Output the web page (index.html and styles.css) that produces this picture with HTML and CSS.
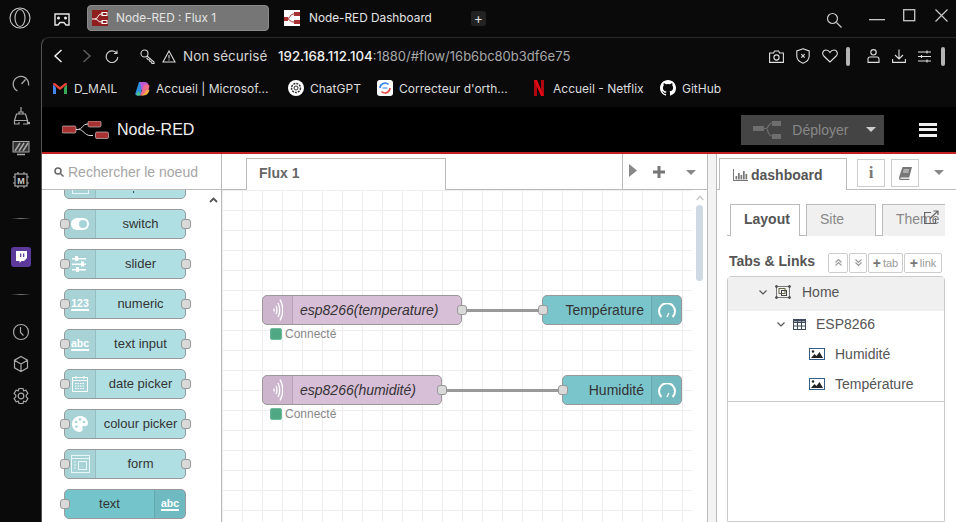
FILE: index.html
```html
<!DOCTYPE html>
<html lang="fr">
<head>
    <meta charset="UTF-8">
    <meta name="viewport" content="width=device-width, initial-scale=1.0">
    <title>Node-RED : Flux 1</title>
    <link rel="stylesheet" href="styles.css">
</head>
<body>
    <!-- Browser tab strip -->
    <div class="titlebar">
        <svg class="opera-logo" width="22" height="22" viewBox="0 0 22 22" fill="none" stroke="#c8c8c8" stroke-width="1.100"><circle cx="11" cy="11" r="10"/><ellipse cx="11" cy="11" rx="5" ry="8.500"/></svg>
        <svg class="game-icon" width="16" height="13" viewBox="0 0 16 13" fill="none" stroke="#e8e8e8" stroke-width="1.400"><path d="M1 1h14v11h-3l-2-2.500H6L4 12H1z"/><circle cx="4.500" cy="5" r=".8" fill="#e8e8e8"/><circle cx="11.500" cy="5" r=".8" fill="#e8e8e8"/></svg>
        <div class="tab tab-active">
            <svg class="favicon" width="16" height="16" viewBox="0 0 16 16"><rect width="16" height="16" fill="#8f1f1f"/><path d="M0 9h3c3 0 3-5 6-5h2M3 9c3 0 3 3 6 3h2" fill="none" stroke="#fff" stroke-width="1"/><rect x="10" y="2.500" width="5" height="3" fill="none" stroke="#fff"/><rect x="10" y="10.500" width="5" height="3" fill="none" stroke="#fff"/></svg>
            <span>Node-RED : Flux 1</span>
        </div>
        <div class="tab tab-other">
            <svg class="favicon" width="16" height="16" viewBox="0 0 16 16"><rect width="16" height="16" fill="#fff"/><path d="M0 9h3c3 0 3-5 6-5h2M3 9c3 0 3 3 6 3h2" fill="none" stroke="#a83232" stroke-width="1"/><rect x="10" y="2" width="6" height="4" fill="#a83232"/><rect x="10" y="10" width="6" height="4" fill="#a83232"/><rect y="7" width="4" height="4" fill="#a83232"/></svg>
            <span>Node-RED Dashboard</span>
        </div>
        <div class="new-tab">+</div>
        <div class="window-controls">
            <svg class="win-search" width="16" height="16" viewBox="0 0 16 16" fill="none" stroke="#c8c8c8" stroke-width="1.200"><circle cx="6.500" cy="6.500" r="5"/><path d="M10.500 10.500l5 5"/></svg>
            <svg class="win-min" width="16" height="2" viewBox="0 0 16 2"><rect width="16" height="1.300" fill="#c8c8c8"/></svg>
            <svg class="win-max" width="13" height="13" viewBox="0 0 13 13" fill="none" stroke="#c8c8c8" stroke-width="1.300"><rect x=".7" y=".7" width="11" height="11"/></svg>
            <svg class="win-close" width="13" height="13" viewBox="0 0 13 13" fill="none" stroke="#c8c8c8" stroke-width="1.200"><path d="M.5.500l12 12M12.500.500l-12 12"/></svg>
        </div>
    </div>

    <div class="shell">
        <!-- Opera side rail -->
        <div class="rail">
            <svg class="rail-icon" width="18" height="18" viewBox="0 0 18 18" fill="none" stroke="#a8a8a8" stroke-width="1.300"><path d="M5.500 16A7.700 7.700 0 1 1 16.500 10.500M9.500 9l4-4.500"/></svg>
            <svg class="rail-icon" width="18" height="18" viewBox="0 0 18 18" fill="none" stroke="#a8a8a8" stroke-width="1.200"><path d="M9 0v5M7 5h4v2H7zM4.500 7h9l2 6.500h-13zM2.500 13.500V17H7v-2M11 17h4.500v-3.500"/><circle cx="17" cy="16" r=".7" fill="#a8a8a8"/></svg>
            <svg class="rail-icon" width="18" height="18" viewBox="0 0 18 18" fill="none" stroke="#a8a8a8" stroke-width="1.500"><rect x="1" y="2.500" width="16" height="10.500" fill="#333" stroke-width="1"/><path d="M3 12l5-8M7 12l5-8M11 12l5-8M5 15.500h8"/></svg>
            <svg class="rail-icon" width="18" height="18" viewBox="0 0 18 18" fill="none" stroke="#a8a8a8" stroke-width="1.200"><rect x="3" y="3" width="12" height="12"/><path d="M1 6h2M1 12h2M15 6h2M15 12h2M6 1v2M12 1v2M6 15v2M12 15v2"/><text x="9" y="12.500" text-anchor="middle" class="chip-letter">M</text></svg>
            <div class="rail-sep rail-sep-first"></div>
            <div class="twitch">
                <svg width="12" height="12" viewBox="0 0 12 12"><path d="M1 0h11v7l-3 3H6.500L4.500 12V10H1z" fill="#fff"/><rect x="5" y="2.500" width="1.300" height="3.500" fill="#5b3a9b"/><rect x="8" y="2.500" width="1.300" height="3.500" fill="#5b3a9b"/></svg>
            </div>
            <div class="rail-sep rail-sep-last"></div>
            <svg class="rail-icon" width="18" height="18" viewBox="0 0 18 18" fill="none" stroke="#a8a8a8" stroke-width="1.200"><circle cx="9" cy="9" r="7.500"/><path d="M8.500 4v5.500l3 3"/></svg>
            <svg class="rail-icon" width="18" height="18" viewBox="0 0 18 18" fill="none" stroke="#a8a8a8" stroke-width="1.200"><path d="M9 1.500l6.500 3.700v7.600L9 16.500l-6.500-3.700V5.200zM2.500 5.200L9 9l6.500-3.800M9 9v7.500"/></svg>
            <svg class="rail-icon" width="18" height="18" viewBox="0 0 18 18" fill="none" stroke="#a8a8a8" stroke-width="1.200"><circle cx="9" cy="9" r="2.800"/><path d="M7 1.500h4l.6 2.300 2.300-.7 2 3.400-1.700 1.700v1.600l1.700 1.700-2 3.400-2.300-.7-.6 2.300H7l-.6-2.300-2.300.7-2-3.400 1.700-1.700V8.200L2.100 6.500l2-3.400 2.300.7z"/></svg>
        </div>

        <div class="window">
            <!-- Address bar -->
            <div class="addressbar">
                <svg class="nav-back" width="10" height="14" viewBox="0 0 10 14" fill="none" stroke="#f0f0f0" stroke-width="1.500"><path d="M8.500 1L2 7l6.500 6"/></svg>
                <svg class="nav-forward" width="10" height="14" viewBox="0 0 10 14" fill="none" stroke="#5c5c5c" stroke-width="1.500"><path d="M1.500 1L8 7l-6.500 6"/></svg>
                <svg class="nav-reload" width="14" height="14" viewBox="0 0 14 14" fill="none" stroke="#c8c8c8" stroke-width="1.200"><path d="M11.800 4.500A5.800 5.800 0 1 0 12.800 8M9 4.500h3V1.500"/></svg>
                <svg class="key" width="15" height="15" viewBox="0 0 15 15" fill="none" stroke="#d8d8d8" stroke-width="1.100"><circle cx="4.500" cy="4.500" r="3.500"/><path d="M7 7l7 6v1.500h-2l-.5-1.500-1.500-.5-.5-1.500-1.500-.5-1.500-1.500"/></svg>
                <svg class="warn" width="14" height="13" viewBox="0 0 14 13" fill="none" stroke="#d8d8d8" stroke-width="1.100"><path d="M7 1l6 11H1zM7 5v3.500M7 9.500v1"/></svg>
                <span class="insecure">Non sécurisé</span>
                <span class="url"><b>192.168.112.104</b>:1880/#flow/16b6bc80b3df6e75</span>
                <div class="address-tools">
                    <svg width="15" height="13" viewBox="0 0 15 13" fill="none" stroke="#e0e0e0" stroke-width="1.100"><path d="M.6 3h4l1-2h4l1 2h3.800v9.400H.6z"/><circle cx="7.500" cy="7.500" r="2.600"/></svg>
                    <svg width="14" height="16" viewBox="0 0 14 16" fill="none" stroke="#e0e0e0" stroke-width="1.100"><path d="M7 .8l6.200 2.200v5c0 3.500-3 6-6.200 7.200C3.800 14 .8 11.500.8 8V3z"/><path d="M5.300 6.200l3.400 3.400M8.700 6.200L5.300 9.600"/></svg>
                    <svg width="16" height="14" viewBox="0 0 16 14" fill="none" stroke="#e0e0e0" stroke-width="1.100"><path d="M8 13L1.800 7C-.4 4.500 1 1 4 1c2 0 3.200 1.200 4 2.500C8.800 2.200 10 1 12 1c3 0 4.400 3.500 2.200 6z"/></svg>
                    <div class="tool-bar tool-bar-first"></div>
                    <svg class="tool-user" width="13" height="14" viewBox="0 0 13 14" fill="none" stroke="#e0e0e0" stroke-width="1.100"><circle cx="6.500" cy="3.300" r="2.700"/><path d="M1 13.400V10c0-1.300 1-2 2-2h7c1 0 2 .7 2 2v3.400z"/></svg>
                    <svg width="14" height="14" viewBox="0 0 14 14" fill="none" stroke="#e0e0e0" stroke-width="1.100"><path d="M7 .5v9M3 6l4 4 4-4M.6 10v3.400h12.800V10"/></svg>
                    <svg width="13" height="13" viewBox="0 0 13 13" fill="none" stroke="#e0e0e0" stroke-width="1.100"><path d="M0 2h13M0 6.500h13M0 11h13M9 .5v3M3.500 5v3M9 9.500v3"/></svg>
                    <div class="tool-bar tool-bar-last"></div>
                </div>
            </div>

            <!-- Bookmarks -->
            <div class="bookmarks">
                <div class="bookmark bm-mail">
                    <svg width="14" height="11" viewBox="0 0 14 11"><path d="M0 1.500V11h3V4.500z" fill="#4285f4"/><path d="M14 1.500V11h-3V4.500z" fill="#34a853"/><path d="M0 1.500C0 0 1.500-.3 2.500.5L7 4 11.500.5C12.500-.3 14 0 14 1.500L7 7z" fill="#ea4335"/></svg>
                    <span>D_MAIL</span>
                </div>
                <div class="bookmark bm-ms">
                    <svg width="15" height="15" viewBox="0 0 15 15"><path d="M4 1h4L6 13c-.3 1-1 1.500-2 1.500H2C.5 14.500 0 13 .5 12z" fill="#2f8ee0"/><path d="M5 1h5c2 0 3 1 3.500 3l-1 4-6 1z" fill="#b85ad8"/><path d="M9 4c2-1 4.500-1 5.500 1l-1 4c-1 3-3 5-6 5.500H5z" fill="#ef6c8a"/><path d="M6 14.500c2-.5 4-2 5-5l3.500-1c-.5 3-2.500 6-6 6z" fill="#f5b13d"/><path d="M1 13l3-3 1.500 4.500H2z" fill="#4bc28a"/></svg>
                    <span>Accueil | Microsof...</span>
                </div>
                <div class="bookmark bm-gpt">
                    <svg width="16" height="16" viewBox="0 0 16 16"><circle cx="8" cy="8" r="8" fill="#fff"/><circle cx="8" cy="8" r="4.500" fill="none" stroke="#333" stroke-width="1.500" stroke-dasharray="2 1"/><circle cx="8" cy="8" r="2" fill="none" stroke="#333"/></svg>
                    <span>ChatGPT</span>
                </div>
                <div class="bookmark bm-correct">
                    <svg width="16" height="16" viewBox="0 0 16 16"><rect width="16" height="16" rx="3" fill="#fff"/><path d="M3 8a5 5 0 0 1 8.500-3.500" fill="none" stroke="#2f80ed" stroke-width="1.600"/><path d="M13 8a5 5 0 0 1-8.500 3.500" fill="none" stroke="#e8483f" stroke-width="1.600"/><path d="M5.500 8h5" stroke="#2f80ed"/></svg>
                    <span>Correcteur d'orth...</span>
                </div>
                <div class="bookmark bm-netflix">
                    <svg width="10" height="16" viewBox="0 0 10 16"><path d="M0 0h3v16l-3 .3z" fill="#b1060f"/><path d="M7 0h3v16.300l-3-.3z" fill="#b1060f"/><path d="M0 0h3l7 16.300-3-.3z" fill="#e50914"/></svg>
                    <span>Accueil - Netflix</span>
                </div>
                <div class="bookmark bm-github">
                    <svg width="16" height="16" viewBox="0 0 16 16"><path fill="#fff" d="M8 0C3.580 0 0 3.580 0 8c0 3.540 2.290 6.530 5.470 7.590.4.070.55-.17.55-.38v-1.340c-2.230.48-2.690-1.070-2.690-1.070-.36-.92-.89-1.170-.89-1.170-.73-.5.050-.49.050-.49.800.060 1.230.830 1.230.830.710 1.220 1.870.870 2.330.660.070-.52.280-.870.510-1.070-1.780-.2-3.640-.89-3.640-3.950 0-.87.310-1.590.820-2.150-.080-.2-.360-1.020.080-2.120 0 0 .670-.210 2.200.820a7.600 7.600 0 0 1 4 0c1.530-1.040 2.200-.82 2.200-.82.440 1.100.160 1.920.080 2.120.510.560.820 1.270.820 2.150 0 3.070-1.870 3.750-3.650 3.950.290.250.540.730.540 1.480v2.200c0 .210.150.460.550.380A8 8 0 0 0 16 8c0-4.420-3.580-8-8-8z"/></svg>
                    <span>GitHub</span>
                </div>
            </div>

            <!-- Node-RED -->
            <div class="nr-header">
                <svg class="nr-logo" width="47" height="18" viewBox="0 0 47 18"><path d="M14 8.500h2c4 0 5-5.500 9-5.500h2M17 8.500c4 0 6 6 11 6h3" fill="none" stroke="#ddd" stroke-width="1"/><rect y="5" width="14" height="7" rx="1.500" fill="#a83232" stroke="#ddd" stroke-width=".6"/><rect x="26" y="0" width="13" height="6" rx="1.500" fill="#a83232" stroke="#ddd" stroke-width=".6"/><rect x="33.500" y="11" width="13" height="6.500" rx="1.500" fill="#a83232" stroke="#ddd" stroke-width=".6"/></svg>
                <span class="nr-title">Node-RED</span>
                <div class="deploy">
                    <svg width="28" height="18" viewBox="0 0 28 18"><rect y="5" width="11" height="5" fill="#6e6e6e"/><path d="M11 7.500h2c2 0 3-5.500 6-5.500M14 8c1 3 2 7 5 7" fill="none" stroke="#6e6e6e" stroke-width="1.200"/><rect x="19" width="9" height="5" fill="#6e6e6e"/><rect x="19" y="13" width="9" height="5" fill="#6e6e6e"/></svg>
                    <span>Déployer</span>
                    <i class="caret caret-deploy"></i>
                </div>
                <div class="burger"><i></i><i></i><i></i></div>
            </div>

            <div class="nr-main">
                <!-- Palette -->
                <div class="palette">
                    <div class="palette-search">
                        <svg width="10" height="10" viewBox="0 0 10 10" fill="none" stroke="#666" stroke-width="1.500"><circle cx="4" cy="4" r="3"/><path d="M6.500 6.500L9.500 9.500"/></svg>
                        <span>Rechercher le noeud</span>
                    </div>
                    <div class="palette-list">
                        <svg class="palette-chevron" width="9" height="6" viewBox="0 0 9 6" fill="none" stroke="#555" stroke-width="1.800"><path d="M1 5l3.500-3.500L8 5"/></svg>
                        <div class="pnode">
                            <div class="pnode-icon"><i class="cut-icon"></i></div>
                            <div class="pnode-label"><i class="cut-descender"></i></div>
                        </div>
                        <div class="pnode">
                            <i class="port port-in"></i>
                            <div class="pnode-icon"><svg width="18" height="12" viewBox="0 0 18 12"><rect width="18" height="12" rx="6" fill="#fff"/><circle cx="12" cy="6" r="4" fill="#a5d3d7"/></svg></div>
                            <div class="pnode-label">switch</div>
                            <i class="port port-out"></i>
                        </div>
                        <div class="pnode">
                            <i class="port port-in"></i>
                            <div class="pnode-icon"><svg width="16" height="18" viewBox="0 0 16 18" fill="#fff"><rect y="3" width="14" height="1.500"/><rect y="8.500" width="14" height="1.500"/><rect y="14" width="14" height="1.500"/><rect x="3" y="1" width="3" height="5"/><rect x="9" y="6.500" width="3" height="5"/><rect x="4" y="12" width="3" height="5"/></svg></div>
                            <div class="pnode-label">slider</div>
                            <i class="port port-out"></i>
                        </div>
                        <div class="pnode">
                            <i class="port port-in"></i>
                            <div class="pnode-icon"><span class="text-icon">123</span></div>
                            <div class="pnode-label">numeric</div>
                            <i class="port port-out"></i>
                        </div>
                        <div class="pnode">
                            <i class="port port-in"></i>
                            <div class="pnode-icon"><span class="text-icon">abc</span></div>
                            <div class="pnode-label">text input</div>
                            <i class="port port-out"></i>
                        </div>
                        <div class="pnode">
                            <i class="port port-in"></i>
                            <div class="pnode-icon"><svg width="16" height="16" viewBox="0 0 16 16" fill="none" stroke="#fff"><rect x=".5" y="1.500" width="15" height="14"/><path d="M.5 4.500h15M4 0v3M12 0v3"/><path d="M3 7.500h10M3 10h10M3 12.500h10" stroke-dasharray="1.500 1"/></svg></div>
                            <div class="pnode-label">date picker</div>
                            <i class="port port-out"></i>
                        </div>
                        <div class="pnode">
                            <i class="port port-in"></i>
                            <div class="pnode-icon"><svg width="16" height="16" viewBox="0 0 16 16"><path d="M8 0c4.500 0 8 3 8 7.500 0 2-2 3-3.500 2.500-2-.5-2.500 1-2 2.500.5 2-1 3.500-3 3.500C3 16 0 12 0 8s3.500-8 8-8z" fill="#fff"/><circle cx="4" cy="6" r="1.300" fill="#a5d3d7"/><circle cx="8" cy="3.500" r="1.300" fill="#a5d3d7"/><circle cx="12" cy="6" r="1.300" fill="#a5d3d7"/><circle cx="4.500" cy="10.500" r="1.300" fill="#a5d3d7"/></svg></div>
                            <div class="pnode-label">colour picker</div>
                            <i class="port port-out"></i>
                        </div>
                        <div class="pnode">
                            <i class="port port-in"></i>
                            <div class="pnode-icon"><svg width="19" height="18" viewBox="0 0 19 18" fill="none" stroke="#e8f6f7"><rect x=".5" y=".5" width="18" height="17"/><path d="M.5 3.500h18"/><rect x="7.500" y="6.500" width="8" height="8"/><path d="M3 7h2M3 10h2M3 13h2"/></svg></div>
                            <div class="pnode-label">form</div>
                            <i class="port port-out"></i>
                        </div>
                        <div class="pnode pnode-output">
                            <i class="port port-in"></i>
                            <div class="pnode-label">text</div>
                            <div class="pnode-icon"><span class="text-icon">abc</span></div>
                        </div>
                    </div>
                </div>

                <!-- Workspace -->
                <div class="workspace">
                    <div class="ws-tabs">
                        <div class="ws-tab">Flux 1</div>
                        <div class="ws-tools">
                            <svg class="ws-play" width="8" height="13" viewBox="0 0 8 13"><path d="M0 0l8 6.500-8 6.500z" fill="#888"/></svg>
                            <svg class="ws-plus" width="12" height="12" viewBox="0 0 12 12"><path d="M4.500 0h3v4.500H12v3H7.500V12h-3V7.500H0v-3h4.500z" fill="#777"/></svg>
                            <i class="caret caret-ws"></i>
                        </div>
                    </div>
                    <div class="canvas">
                        <div class="canvas-grid"></div>
                        <svg class="canvas-chevron" width="8" height="6" viewBox="0 0 8 6" fill="none" stroke="#ccc" stroke-width="1.800"><path d="M.7 5L4 1.500 7.300 5"/></svg>
                        <div class="canvas-thumb"></div>

                        <div class="wire wire-temp"></div>
                        <div class="wire wire-hum"></div>

                        <div class="node node-mqtt node-temp-in">
                            <div class="node-icon"><svg width="10" height="24" viewBox="0 0 10 24" fill="none" stroke="#fff" stroke-width="1.300"><path d="M1 10.500v3M3 8c1.200 2.500 1.200 5.500 0 8M5 5c2.200 4.500 2.200 9.500 0 14M7 1.500c3.500 6.500 3.500 14.500 0 21"/></svg></div>
                            <div class="node-label">esp8266(temperature)</div>
                            <i class="port port-out"></i>
                        </div>
                        <div class="status status-temp"><i></i>Connecté</div>

                        <div class="node node-gauge node-temp-out">
                            <i class="port port-in"></i>
                            <div class="node-label">Température</div>
                            <div class="node-icon"><svg width="18" height="15" viewBox="0 0 18 15" fill="none" stroke="#fff" stroke-width="2"><path d="M3.500 14a8 8 0 1 1 11 0"/><path d="M9 14l1.800-4" stroke-width="1.300"/></svg></div>
                        </div>

                        <div class="node node-mqtt node-hum-in">
                            <div class="node-icon"><svg width="10" height="24" viewBox="0 0 10 24" fill="none" stroke="#fff" stroke-width="1.300"><path d="M1 10.500v3M3 8c1.200 2.500 1.200 5.500 0 8M5 5c2.200 4.500 2.200 9.500 0 14M7 1.500c3.500 6.500 3.500 14.500 0 21"/></svg></div>
                            <div class="node-label">esp8266(humidité)</div>
                            <i class="port port-out"></i>
                        </div>
                        <div class="status status-hum"><i></i>Connecté</div>

                        <div class="node node-gauge node-hum-out">
                            <i class="port port-in"></i>
                            <div class="node-label">Humidité</div>
                            <div class="node-icon"><svg width="18" height="15" viewBox="0 0 18 15" fill="none" stroke="#fff" stroke-width="2"><path d="M3.500 14a8 8 0 1 1 11 0"/><path d="M9 14l1.800-4" stroke-width="1.300"/></svg></div>
                        </div>
                    </div>
                </div>

                <div class="gutter"></div>

                <!-- Sidebar -->
                <div class="sidebar">
                    <div class="side-tabs">
                        <div class="side-tab">
                            <svg width="15" height="12" viewBox="0 0 15 12" fill="#777"><path d="M0 0h1v11h14v1H0zM2.500 7h1.700v3.500H2.500zM5 4h1.700v6.500H5zM7.500 6h1.700v4.500H7.500zM10 2h1.700v8.500H10zM12.500 5h1.700v5.500h-1.700z"/></svg>
                            <span>dashboard</span>
                        </div>
                        <div class="side-btn side-info">i</div>
                        <div class="side-btn">
                            <svg width="13" height="13" viewBox="0 0 13 13"><path d="M3.500 0H13l-2.800 10.500H2C1.200 10.500 1 11.800 2 11.800h8.500L10.200 13H1.500C0 13-.2 11 .3 9.500z" fill="#777"/><path d="M4.500 3h5.500M4 5h5.500" stroke="#fff" stroke-width=".8"/></svg>
                        </div>
                        <i class="caret caret-side"></i>
                    </div>
                    <div class="side-body">
                        <div class="inner-tabs">
                            <div class="inner-tab inner-active">Layout</div>
                            <div class="inner-tab">Site</div>
                            <div class="inner-tab inner-theme">Theme</div>
                            <svg class="popout" width="15" height="14" viewBox="0 0 15 14" fill="none" stroke="#666" stroke-width="1.200"><path d="M7 2.500H.6v11h11V8M6 8.500L14 1M9.500 1H14v4"/></svg>
                        </div>
                        <div class="links-head">
                            <span>Tabs &amp; Links</span>
                            <div class="mini-btns">
                                <div class="mini mini-arrow">
                                    <svg width="7" height="7" viewBox="0 0 7 7" fill="none" stroke="#999" stroke-width="1.100"><path d="M.5 3.500l3-3 3 3M.5 6.500l3-3 3 3"/></svg>
                                </div>
                                <div class="mini mini-arrow">
                                    <svg width="7" height="7" viewBox="0 0 7 7" fill="none" stroke="#999" stroke-width="1.100"><path d="M.5.500l3 3 3-3M.5 3.500l3 3 3-3"/></svg>
                                </div>
                                <div class="mini mini-tab"><b>+</b>tab</div>
                                <div class="mini mini-link"><b>+</b>link</div>
                            </div>
                        </div>
                        <div class="tree">
                            <div class="tree-row tree-home">
                                <svg width="8" height="5" viewBox="0 0 8 5" fill="none" stroke="#555" stroke-width="1.200"><path d="M.5.500L4 4 7.500.500"/></svg>
                                <svg width="16" height="14" viewBox="0 0 16 14" fill="none" stroke="#444" stroke-width="1"><rect x="1.500" y="1.500" width="13" height="11" stroke-opacity=".7"/><rect x="4" y="3.500" width="6" height="5" stroke="#6b6b4a"/><rect x="6.500" y="5.500" width="5" height="5"/><circle cx="1.500" cy="1.500" r="1" fill="#555"/><circle cx="14.500" cy="1.500" r="1" fill="#555"/><circle cx="1.500" cy="12.500" r="1" fill="#555"/><circle cx="14.500" cy="12.500" r="1" fill="#555"/></svg>
                                <span>Home</span>
                            </div>
                            <div class="tree-row tree-group">
                                <svg width="8" height="5" viewBox="0 0 8 5" fill="none" stroke="#555" stroke-width="1.200"><path d="M.5.500L4 4 7.500.500"/></svg>
                                <svg width="13" height="11" viewBox="0 0 13 11" fill="none" stroke="#3c4a5c"><rect x=".5" y=".5" width="12" height="10"/><path d="M.5 3.500h12M.5 7h12M4.500.5v10M8.500.5v10"/><path d="M.5 1.500h12" stroke-width="2"/></svg>
                                <span>ESP8266</span>
                            </div>
                            <div class="tree-row tree-widget">
                                <svg width="16" height="12" viewBox="0 0 16 12"><rect x=".5" y=".5" width="15" height="11" fill="#fff" stroke="#345d8a"/><path d="M2 10l3.500-4 2 2 3-4 3.500 6z" fill="#222"/><circle cx="4" cy="3.500" r="1.200" fill="#222"/></svg>
                                <span>Humidité</span>
                            </div>
                            <div class="tree-row tree-widget">
                                <svg width="16" height="12" viewBox="0 0 16 12"><rect x=".5" y=".5" width="15" height="11" fill="#fff" stroke="#345d8a"/><path d="M2 10l3.500-4 2 2 3-4 3.500 6z" fill="#222"/><circle cx="4" cy="3.500" r="1.200" fill="#222"/></svg>
                                <span>Température</span>
                            </div>
                        </div>
                    </div>
                </div>
            </div>
        </div>
    </div>
</body>
</html>
```

FILE: styles.css
```css
* {
    box-sizing: border-box;
}

html, body {
    margin: 0;
    height: 522px;
    overflow: hidden;
    background: #0a0a0a;
}

body {
    font-family: "Liberation Sans", Arial, sans-serif;
    width: 956px;
}

svg {
    display: block;
    flex: none;
}

/* Tab strip */
.titlebar {
    height: 37px;
    display: flex;
    align-items: center;
    color: #e4e4e4;
    font-family: Inter, sans-serif;
    font-size: 11.8px;
}

.opera-logo {
    margin-left: 9px;
    margin-top: -1px;
}

.game-icon {
    margin-left: 23px;
    margin-right: 17px;
    margin-top: 1px;
}

.tab {
    height: 26px;
    margin-top: -1px;
    display: flex;
    align-items: center;
}

.tab-active {
    width: 182px;
    margin-right: 15px;
    background: #767676;
    border: 1px solid #8a8a8a;
    border-radius: 4px;
    padding-left: 4px;
    gap: 8px;
}

.tab-other {
    width: 187px;
    gap: 9px;
}

.new-tab {
    width: 15px;
    height: 15px;
    background: #222;
    border-radius: 3px;
    line-height: 14px;
    text-align: center;
    font-size: 14px;
    color: #ddd;
}

.window-controls {
    margin-left: auto;
    display: flex;
    align-items: center;
    padding-right: 8px;
}

.win-search {
    margin-top: 3px;
}

.win-min {
    margin-left: 27px;
    margin-top: 3px;
}

.win-max {
    margin-left: 18px;
    margin-top: -7px;
}

.win-close {
    margin-left: 19px;
    margin-top: -7px;
}

/* Layout below the tabs */
.shell {
    display: flex;
    height: 485px;
}

.rail {
    width: 41px;
    display: flex;
    flex-direction: column;
    align-items: center;
    padding-top: 38px;
    gap: 14px;
    flex: none;
}

.chip-letter {
    font-family: "Liberation Sans", sans-serif;
    font-size: 9px;
    font-weight: bold;
    fill: #c8c8c8;
    stroke: none;
}

.rail-sep {
    width: 20px;
    height: 1px;
    background: linear-gradient(90deg, #0a0a0a, #777, #0a0a0a);
}

.rail-sep-first {
    margin-top: 15px;
}

.rail-sep-last {
    margin-bottom: 14px;
    margin-top: 13px;
}

.twitch {
    width: 20px;
    height: 20px;
    margin-top: 14px;
    border-radius: 3px;
    background: #5b3a9b;
    display: flex;
    align-items: center;
    justify-content: center;
}

.window {
    flex: 1;
    min-width: 0;
    border-left: 1px solid #555;
    border-top: 1px solid #2a2a2a;
    border-top-left-radius: 8px;
    display: flex;
    flex-direction: column;
    background: #0a0a0a;
}

/* Address bar */
.addressbar {
    height: 34px;
    flex: none;
    display: flex;
    align-items: center;
    font-family: Inter, sans-serif;
    color: #d4d4d4;
    font-size: 13.5px;
    padding-top: 2px;
}

.nav-back {
    margin-left: 11px;
}

.nav-forward {
    margin-left: 19px;
}

.nav-reload {
    margin-left: 13px;
}

.key {
    margin-left: 21px;
}

.warn {
    margin-left: 7px;
}

.insecure {
    margin-left: 7px;
    width: 95px;
    white-space: nowrap;
}

.url {
    color: #a8a8a8;
    white-space: nowrap;
    font-size: 13px;
}

.url b {
    font-weight: 500;
    font-size: 13.300px;
    color: #f0f0f0;
}

.address-tools {
    margin-left: auto;
    padding-right: 11px;
    display: flex;
    align-items: center;
    gap: 11px;
}

.tool-bar {
    width: 4px;
    height: 19px;
    border-radius: 2px;
    background: #b4b4b4;
}

.tool-bar-first {
    margin-left: -3px;
}

.tool-bar-last {
    margin-left: -1px;
}

.tool-user {
    margin-left: 6px;
}

.address-tools svg + svg {
    margin-left: 1px;
}

/* Bookmarks */
.bookmarks {
    height: 35px;
    flex: none;
    display: flex;
    align-items: center;
    font-family: Inter, sans-serif;
    font-size: 12px;
    color: #dcdcdc;
    padding-left: 11px;
    padding-bottom: 3px;
}

.bookmark {
    display: flex;
    align-items: center;
    gap: 6px;
    white-space: nowrap;
}

.bm-mail {
    width: 82px;
    gap: 7px;
}

.bm-ms {
    width: 153px;
}

.bm-gpt {
    width: 89px;
}

.bm-correct {
    width: 157px;
}

.bm-netflix {
    width: 126px;
    gap: 9px;
}

/* Node-RED header */
.nr-header {
    height: 47px;
    flex: none;
    background: #000;
    border-bottom: 2px solid #c02020;
    display: flex;
    align-items: center;
    padding-left: 20px;
}

.nr-logo {
    margin-top: 1px;
}

.nr-title {
    margin-left: 8px;
    font-size: 16px;
    color: #eee;
}

.deploy {
    margin-left: 547px;
    width: 143px;
    height: 30px;
    background: #444;
    display: flex;
    align-items: center;
    padding-left: 12px;
    color: #888;
    font-size: 14px;
}

.deploy span {
    margin-left: 11px;
}

.caret {
    display: block;
    width: 0;
    height: 0;
    border-left: 5px solid transparent;
    border-right: 5px solid transparent;
    border-top: 5px solid #888;
}

.caret-deploy {
    margin-left: 18px;
    border-top-color: #ccc;
}

.burger {
    margin-left: 35px;
    width: 18px;
    display: flex;
    flex-direction: column;
    gap: 2.500px;
}

.burger i {
    height: 3px;
    background: #eee;
}

/* Main area */
.nr-main {
    flex: 1;
    min-height: 0;
    display: flex;
    background: #fff;
    color: #555;
}

.palette {
    width: 180px;
    flex: none;
    border-right: 1px solid #bbb;
    display: flex;
    flex-direction: column;
    overflow: hidden;
}

.palette-search {
    position: relative;
    z-index: 3;
    height: 36px;
    flex: none;
    background: #fff;
    border-bottom: 1px solid #bbb;
    display: flex;
    align-items: center;
    padding-left: 12px;
    gap: 4px;
    color: #a5a5a5;
    font-size: 14px;
}

.palette-list {
    position: relative;
    flex: 1;
    padding: 0 0 0 22px;
    margin-top: -21px;
    display: flex;
    flex-direction: column;
    gap: 10px;
}

.palette-chevron {
    position: absolute;
    top: 28px;
    left: 167px;
}

.pnode {
    position: relative;
    flex: none;
    width: 122px;
    height: 30px;
    border: 1px solid #999;
    border-radius: 5px;
    background: #b0dfe3;
    display: flex;
    color: #333;
    font-size: 13px;
}

.pnode-icon {
    width: 31px;
    flex: none;
    background: rgba(0, 0, 0, 0.05);
    border-right: 1px solid rgba(0, 0, 0, 0.1);
    border-radius: 4px 0 0 4px;
    display: flex;
    align-items: center;
    justify-content: center;
}

.pnode-label {
    flex: 1;
    text-align: center;
    line-height: 28px;
    white-space: nowrap;
}

/* what still shows of the node scrolled under the search box */
.cut-icon {
    width: 17px;
    height: 15px;
    margin-top: 4px;
    border: 1px solid #e8f6f7;
}

.cut-descender {
    display: block;
    width: 1px;
    height: 2px;
    margin: 21px 0 0 37px;
    background: #444;
}

.text-icon {
    color: #fff;
    font-size: 10.500px;
    font-weight: bold;
    line-height: 11px;
    border-bottom: 2px solid #fff;
}

.pnode-output {
    background: #74c5cb;
}

.pnode-output .pnode-icon {
    border-right: 0;
    border-left: 1px solid rgba(0, 0, 0, 0.1);
    border-radius: 0 4px 4px 0;
}

.port {
    position: absolute;
    top: 9px;
    width: 10px;
    height: 10px;
    background: #d9d9d9;
    border: 1px solid #999;
    border-radius: 3px;
    z-index: 2;
}

.port-in {
    left: -5px;
}

.port-out {
    right: -6px;
}

/* Workspace */
.workspace {
    width: 485px;
    flex: none;
    display: flex;
    flex-direction: column;
}

.ws-tabs {
    height: 36px;
    flex: none;
    display: flex;
    border-bottom: 1px solid #bbb;
    padding-left: 24px;
    padding-top: 4px;
}

.ws-tab {
    width: 200px;
    height: 32px;
    border: 1px solid #bbb;
    border-bottom: 0;
    background: #fff;
    color: #666;
    font-size: 14px;
    font-weight: bold;
    line-height: 29px;
    padding-left: 12px;
}

.ws-tools {
    margin-left: 176px;
    margin-top: -4px;
    width: 85px;
    border-left: 1px solid #bbb;
    display: flex;
    align-items: center;
    padding-left: 6px;
}

.ws-play {
    margin-top: -2px;
}

.ws-plus {
    margin-left: 16px;
    margin-top: 1px;
}

.caret-ws {
    margin-left: 21px;
    margin-top: 2px;
}

.canvas {
    flex: 1;
    position: relative;
    overflow: hidden;
}

.canvas-grid {
    position: absolute;
    left: 0;
    top: 0;
    width: 470px;
    height: 100%;
    background-image: linear-gradient(#eee 1px, transparent 1px), linear-gradient(90deg, #eee 1px, transparent 1px);
    background-size: 20px 20px;
}

.canvas-chevron {
    position: absolute;
    left: 474px;
    top: 5px;
}

.canvas-thumb {
    position: absolute;
    left: 474px;
    top: 15px;
    width: 7px;
    height: 76px;
    border-radius: 4px;
    background: #cfd9e3;
}

.wire {
    position: absolute;
    height: 3px;
    background: #999;
}

.wire-temp {
    left: 240px;
    top: 119px;
    width: 80px;
}

.wire-hum {
    left: 220px;
    top: 199px;
    width: 120px;
}

.node {
    position: absolute;
    height: 30px;
    border: 1px solid #999;
    border-radius: 5px;
    display: flex;
    color: #333;
    font-size: 14px;
}

.node-label {
    flex: 1;
    line-height: 28px;
    white-space: nowrap;
}

.node-icon {
    width: 30px;
    flex: none;
    display: flex;
    align-items: center;
    justify-content: center;
    background: rgba(0, 0, 0, 0.05);
}

.node-mqtt {
    background: #d8bfd8;
}

.node-mqtt .node-icon {
    border-right: 1px solid rgba(0, 0, 0, 0.1);
    border-radius: 4px 0 0 4px;
}

.node-mqtt .node-label {
    font-style: italic;
    padding-left: 7px;
}

.node-gauge {
    background: #7ac5cb;
}

.node-gauge .node-icon {
    border-left: 1px solid rgba(0, 0, 0, 0.1);
    border-radius: 0 4px 4px 0;
}

.node-gauge .node-label {
    text-align: right;
    padding-right: 7px;
}

.node-temp-in {
    left: 40px;
    top: 105px;
    width: 200px;
}

.node-temp-out {
    left: 320px;
    top: 105px;
    width: 140px;
}

.node-hum-in {
    left: 40px;
    top: 185px;
    width: 180px;
}

.node-hum-out {
    left: 340px;
    top: 185px;
    width: 120px;
}

.status {
    position: absolute;
    left: 48px;
    display: flex;
    align-items: center;
    gap: 3px;
    color: #888;
    font-size: 12px;
    line-height: 12px;
}

.status i {
    width: 12px;
    height: 12px;
    border-radius: 2px;
    background: #4fa883;
    border: 1px solid #6cbc9c;
}

.status-temp {
    top: 138px;
}

.status-hum {
    top: 218px;
}

/* Sidebar */
.gutter {
    width: 10px;
    flex: none;
    background: #f3f3f3;
    border-left: 1px solid #bbb;
    border-right: 1px solid #bbb;
}

.sidebar {
    flex: 1;
    min-width: 0;
    display: flex;
    flex-direction: column;
}

.side-tabs {
    height: 36px;
    flex: none;
    display: flex;
    align-items: flex-start;
    border-bottom: 1px solid #bbb;
    padding-left: 2px;
    padding-top: 4px;
}

.side-tab {
    width: 128px;
    height: 32px;
    border: 1px solid #bbb;
    border-bottom: 0;
    background: #fff;
    display: flex;
    align-items: center;
    padding-left: 13px;
    gap: 3px;
    font-size: 14px;
    font-weight: bold;
    color: #555;
}

.side-btn {
    width: 28px;
    height: 28px;
    margin-left: 6px;
    margin-top: 1px;
    border: 1px solid #ccc;
    display: flex;
    align-items: center;
    justify-content: center;
    color: #777;
}

.side-info {
    margin-left: 10px;
    font-family: "Liberation Serif", serif;
    font-weight: bold;
    font-size: 17px;
}

.caret-side {
    margin-left: 15px;
    margin-top: 12px;
}

.side-body {
    flex: 1;
    padding: 0 11px 0 10px;
    display: flex;
    flex-direction: column;
}

.inner-tabs {
    position: relative;
    margin-top: 14px;
    height: 32px;
    flex: none;
    border-bottom: 1px solid #bbb;
    padding-left: 3px;
    display: flex;
    gap: 6px;
    font-size: 14px;
}

.inner-tab {
    width: 70px;
    height: 32px;
    padding-left: 13px;
    border: 1px solid #bbb;
    border-bottom: 0;
    background: #f0f0f0;
    color: #888;
    line-height: 29px;
}

.inner-active {
    background: #fff;
    color: #555;
    font-weight: bold;
}

.inner-theme {
    width: 63px;
    border-right: 0;
    overflow: hidden;
}

.popout {
    position: absolute;
    right: 6px;
    top: 6px;
}

.links-head {
    height: 40px;
    flex: none;
    display: flex;
    align-items: center;
    font-size: 14px;
    font-weight: bold;
    color: #555;
    padding-left: 2px;
    padding-top: 10px;
    white-space: nowrap;
}

.mini-btns {
    margin-left: auto;
    margin-right: 3px;
    margin-top: 3px;
    display: flex;
    gap: 1px;
}

.mini {
    height: 20px;
    border: 1px solid #ccc;
    border-radius: 2px;
    display: flex;
    align-items: center;
    justify-content: center;
    font-size: 11px;
    font-weight: normal;
    color: #999;
}

.mini b {
    color: #777;
    font-size: 14px;
    margin-right: 2px;
}

.mini-arrow {
    width: 20px;
}

.mini-arrow + .mini-arrow {
    width: 18px;
}

.mini-tab {
    width: 35px;
}

.mini-link {
    width: 38px;
}

.tree {
    flex: 1;
    border: 1px solid #ccc;
    border-radius: 4px 4px 0 0;
    font-size: 14px;
    color: #555;
}

.tree-row {
    display: flex;
    align-items: center;
    height: 30px;
    white-space: nowrap;
}

.tree-home {
    height: 34px;
    background: #f0f0f0;
    padding-left: 31px;
    padding-bottom: 4px;
    gap: 8px;
}

.tree-home span {
    margin-left: 3px;
}

.tree-group {
    height: 28px;
    padding-left: 49px;
    padding-bottom: 2px;
    gap: 8px;
}

.tree-group span {
    margin-left: 2px;
}

.tree-widget {
    padding-left: 81px;
    gap: 10px;
}

.tree-widget:last-child {
    border-bottom: 1px solid #ccc;
    height: 33px;
    padding-bottom: 3px;
}
```
